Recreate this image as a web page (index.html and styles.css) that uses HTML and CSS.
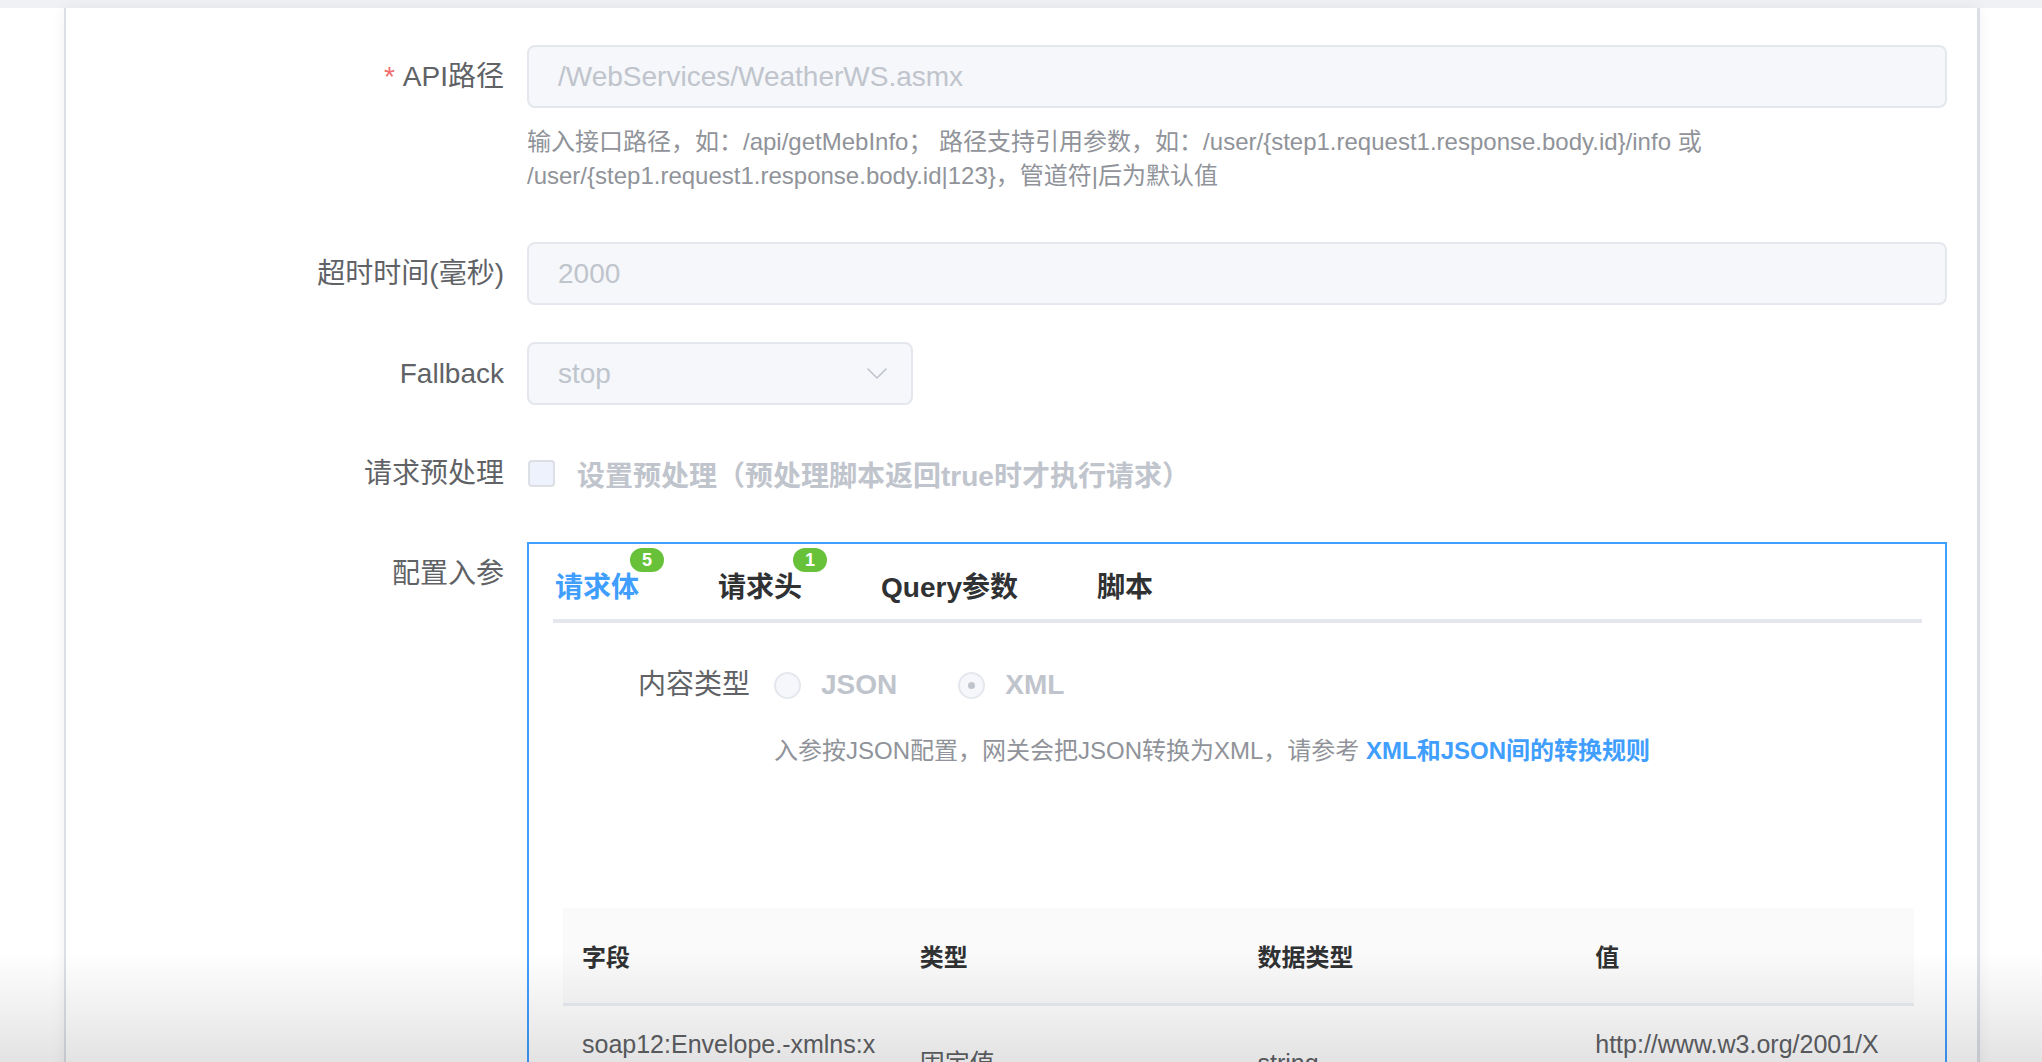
FILE: index.html
```html
<!DOCTYPE html>
<html lang="zh-CN">
<head>
<meta charset="utf-8">
<title>API配置</title>
<link rel="stylesheet" href="styles.css">
</head>
<body>
<div class="topbar"></div>
<div class="page">
  <div class="panel">
    <div class="item item-help">
      <div class="label"><span class="req">*</span>API路径</div>
      <div class="control">
        <div class="input">/WebServices/WeatherWS.asmx</div>
        <div class="help">输入接口路径，如：/api/getMebInfo； 路径支持引用参数，如：/user/{step1.request1.response.body.id}/info 或<br>/user/{step1.request1.response.body.id|123}，管道符|后为默认值</div>
      </div>
    </div>

    <div class="item">
      <div class="label">超时时间(毫秒)</div>
      <div class="control">
        <div class="input">2000</div>
      </div>
    </div>

    <div class="item">
      <div class="label">Fallback</div>
      <div class="control">
        <div class="input select">
          <span>stop</span>
          <svg class="chev" width="20" height="11" viewBox="0 0 20 11"><path d="M1 1 L10 10 L19 1" fill="none" stroke="#C0C4CC" stroke-width="1.6" stroke-linecap="round" stroke-linejoin="round"/></svg>
        </div>
      </div>
    </div>

    <div class="item">
      <div class="label">请求预处理</div>
      <div class="control check-row">
        <span class="checkbox"></span>
        <span class="check-text">设置预处理（预处理脚本返回true时才执行请求）</span>
      </div>
    </div>

    <div class="item">
      <div class="label">配置入参</div>
      <div class="control">
        <div class="box">
          <div class="tabs">
            <div class="tab active">请求体<span class="badge">5</span></div>
            <div class="tab">请求头<span class="badge">1</span></div>
            <div class="tab">Query参数</div>
            <div class="tab">脚本</div>
          </div>

          <div class="ctype">
            <div class="clabel">内容类型</div>
            <div class="radios">
              <span class="radio"><span class="dot"></span><span class="rtext">JSON</span></span>
              <span class="radio checked"><span class="dot"></span><span class="rtext">XML</span></span>
            </div>
            <div class="chelp">入参按JSON配置，网关会把JSON转换为XML，请参考 <a class="link">XML和JSON间的转换规则</a></div>
          </div>

          <table class="table">
            <thead>
              <tr><th>字段</th><th>类型</th><th>数据类型</th><th>值</th></tr>
            </thead>
            <tbody>
              <tr>
                <td>soap12:Envelope.-xmlns:xsi</td>
                <td>固定值</td>
                <td>string</td>
                <td>http://www.w3.org/2001/XMLSchema-instance</td>
              </tr>
            </tbody>
          </table>
        </div>
      </div>
    </div>
  </div>
</div>
<div class="shade"></div>
</body>
</html>
```

FILE: styles.css
```css
html, body {
  margin: 0;
  padding: 0;
  background: #ffffff;
  height: 1062px;
  overflow: hidden;
  font-family: "Liberation Sans", "Noto Sans CJK SC", sans-serif;
}

.topbar {
  height: 8px;
  background: #eff1f5;
}

.page {
  padding: 0 62px 0 64px;
}

.panel {
  border-left: 2px solid #dcdfe6;
  border-right: 3px solid #dcdfe6;
  box-shadow: 0 0 14px rgba(0, 0, 0, 0.06);
  padding: 37px 30px 0 0;
  min-height: 1100px;
  background: #fff;
}

.item {
  display: grid;
  grid-template-columns: 438px 1fr;
  column-gap: 23px;
  margin-bottom: 37px;
}

.label {
  font-size: 28px;
  line-height: 63px;
  color: #606266;
  text-align: right;
  white-space: nowrap;
}

.req {
  color: #f56c6c;
  margin-right: 8px;
}

.input {
  box-sizing: border-box;
  height: 63px;
  border: 2px solid #e4e7ed;
  border-radius: 8px;
  background: #f5f7fa;
  color: #c0c4cc;
  font-size: 28px;
  line-height: 60px;
  padding: 0 29px;
}

.select {
  width: 386px;
  display: flex;
  align-items: center;
  justify-content: space-between;
  padding-right: 24px;
}

.chev {
  display: block;
}

.help {
  margin-top: 17px;
  padding-bottom: 12px;
  font-size: 24px;
  line-height: 34px;
  color: #909399;
}

.check-row {
  display: flex;
  align-items: center;
  height: 63px;
}

.checkbox {
  box-sizing: border-box;
  width: 27px;
  height: 27px;
  border: 2px solid #dcdfe6;
  border-radius: 4px;
  background: #edf2fc;
  margin-left: 1px;
}

.check-text {
  margin-left: 22px;
  font-size: 28px;
  font-weight: 600;
  color: #c0c4cc;
}

.box {
  border: 2px solid #409eff;
  border-bottom: none;
  padding: 0 23px 0 24px;
  min-height: 560px;
}

.tabs {
  display: flex;
  gap: 79px;
  border-bottom: 4px solid #e4e7ed;
  padding-left: 2px;
}

.tab {
  position: relative;
  padding-top: 13px;
  line-height: 62px;
  font-size: 28px;
  font-weight: 600;
  color: #303133;
  white-space: nowrap;
}

.tab.active {
  color: #409eff;
}

.badge {
  position: absolute;
  top: 4px;
  left: calc(100% - 9px);
  height: 24px;
  min-width: 10px;
  padding: 0 12px;
  border-radius: 12px;
  background: #67c23a;
  color: #fff;
  font-size: 18px;
  font-weight: 700;
  line-height: 24px;
  text-align: center;
}

.ctype {
  display: grid;
  grid-template-columns: 197px 1fr;
  column-gap: 24px;
  margin-top: 31px;
}

.clabel {
  font-size: 28px;
  line-height: 62px;
  color: #606266;
  text-align: right;
}

.radios {
  display: flex;
  align-items: center;
  height: 62px;
}

.radio {
  display: inline-flex;
  align-items: center;
  margin-right: 61px;
}

.dot {
  box-sizing: border-box;
  width: 27px;
  height: 27px;
  border: 2px solid #e4e7ed;
  border-radius: 50%;
  background: #f5f7fa;
  display: inline-flex;
  align-items: center;
  justify-content: center;
}

.radio.checked .dot::after {
  content: "";
  width: 7px;
  height: 7px;
  border-radius: 50%;
  background: #c0c4cc;
}

.rtext {
  margin-left: 20px;
  font-size: 28px;
  font-weight: 600;
  color: #c0c4cc;
}

.chelp {
  grid-column: 2;
  margin-top: 18px;
  font-size: 24px;
  line-height: 34px;
  color: #909399;
}

.link {
  color: #409eff;
  font-weight: 600;
  text-decoration: none;
}

.table {
  margin: 140px 8px 0 10px;
  width: calc(100% - 18px);
  border-collapse: collapse;
  table-layout: fixed;
}

.table th {
  height: 95px;
  background: #fafafa;
  border-bottom: 3px solid #ebeef5;
  text-align: left;
  padding: 0 19px;
  font-size: 24px;
  font-weight: 700;
  color: #303133;
}

.table td {
  padding: 19px 19px 22px 19px;
  font-size: 25px;
  line-height: 38px;
  color: #606266;
  word-break: break-all;
  vertical-align: middle;
}

.shade {
  position: fixed;
  left: 0;
  right: 0;
  bottom: 0;
  height: 110px;
  background: linear-gradient(to bottom, rgba(0, 0, 0, 0), rgba(0, 0, 0, 0.11));
  pointer-events: none;
}
```
